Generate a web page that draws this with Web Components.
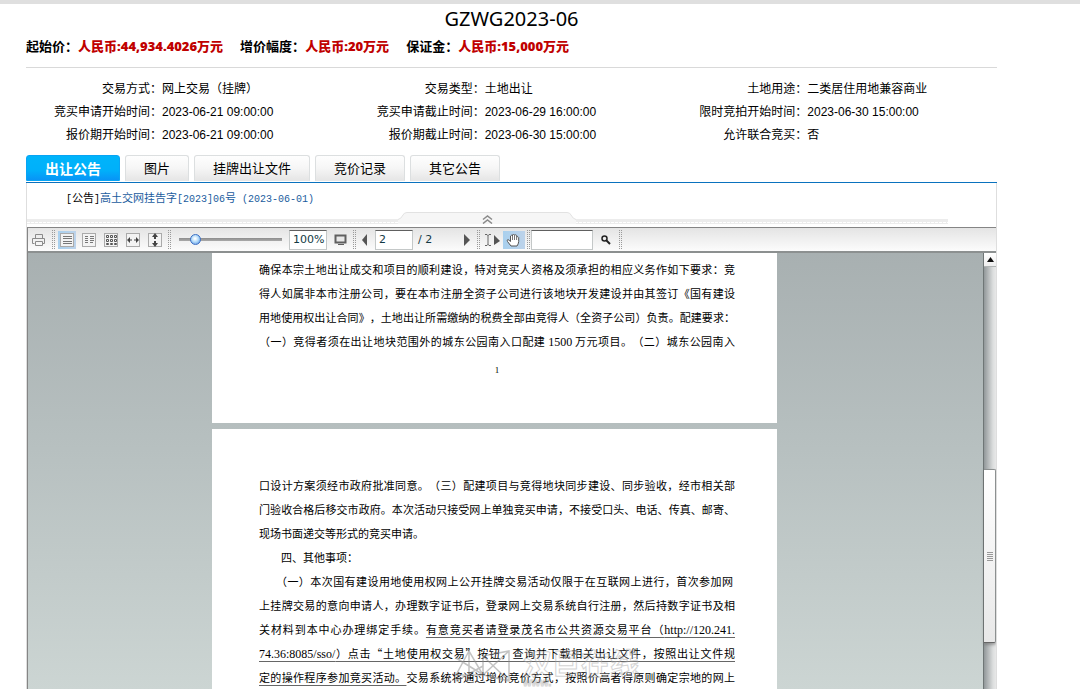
<!DOCTYPE html>
<html lang="zh-CN">
<head>
<meta charset="utf-8">
<title>GZWG2023-06</title>
<style>
html,body{margin:0;height:100%;background:#fff;color:#000;font-family:"Liberation Sans","Noto Sans CJK SC",sans-serif;font-size:12px}
</style>
</head>
<body>
<land-listing></land-listing>
<script>
const define = (name, css, html) => customElements.define(name, class extends HTMLElement {
  constructor() {
    super();
    const t = document.createElement('template');
    t.innerHTML = `<style>*{box-sizing:border-box}${css}</style>${html}`;
    this.attachShadow({mode: 'open'}).appendChild(t.content.cloneNode(true));
  }
});

define('price-item', `
:host{display:block;font:bold 13px/25px "Noto Sans","Noto Sans CJK SC",sans-serif}
b{color:#c00000}
`, `<slot name="label"></slot><b><slot></slot></b>`);

define('detail-row', `
:host{display:flex;line-height:23px;white-space:nowrap}
span{width:136px;flex:none;text-align:right;text-spacing-trim:space-all}
`, `<span><slot name="label"></slot></span><slot></slot>`);

define('tab-item', `
:host{display:block}
button{display:block;height:26px;padding:0 18px;border:1px solid #dcdfe0;border-bottom-color:#e6e6e6;border-radius:3px 3px 0 0;background:linear-gradient(#fefefe,#f6f6f6 50%,#e6e6e6);font:13px/20px "Noto Sans CJK SC",sans-serif;color:#000}
:host([active]) button{font-weight:bold;font-size:14px;color:#fff;border-color:#08a4f4;background:linear-gradient(#00b4fa,#00b0fa 60%,#0894f6)}
`, `<button type="button" role="tab"><slot></slot></button>`);

define('tool-button', `
:host{display:flex;width:22px;flex:none;justify-content:center}
:host([narrow]){width:16px}
button{display:flex;align-items:center;justify-content:center;width:100%;height:18px;padding:0;border:0;background:none}
:host([view]) button{width:18px}
:host([active]) button{background:linear-gradient(90deg,#a9d0ee,#bdd3ea)}
`, `<button type="button"><slot></slot></button>`);

define('tool-sep', `
:host{display:flex;justify-content:center;gap:1px;width:6px;height:20px;flex:none}
i{width:1px;background:repeating-linear-gradient(#9a9a9a 0 1px,transparent 1px 2px)}
`, `<i></i><i></i>`);

define('pdf-toolbar', `
:host{display:flex;align-items:center;height:26px;border-top:1px solid #858585;border-bottom:2px solid #8c9090;background:linear-gradient(#e4e4e4,#fcfcfc)}
input[type=text]{height:20px;border:1px solid #c4c8c8;border-top:1px solid #606060;background:#fff;padding:0 0 0 3px;font:11px "DejaVu Sans",sans-serif;color:#123944;border-radius:0;outline:0}
.zoom{width:38px;margin-left:7px;margin-right:2px}
.page{width:38px;margin-left:2px}
.count{font:11px/20px "DejaVu Sans",sans-serif;color:#123944;width:41px;margin-left:5px}
.find{width:62px;margin-left:0;margin-right:2px}
input[type=range]{appearance:none;width:103px;height:12px;margin:0 0 0 7px;background:linear-gradient(#8b8b8b,#aaa) center/100% 3px no-repeat}
input[type=range]::-webkit-slider-thumb{appearance:none;width:11px;height:11px;border-radius:50%;border:1px solid #3d6fc4;background:radial-gradient(circle at 45% 40%,#fff 5%,#b4dcfa 45%,#4b86dd)}
svg{display:block}
`, `
<tool-button><svg width="16" height="14" fill="none" stroke="#8a8a8a"><path d="M4.500 5V1.500h7V5M3.500 10.500h-2v-5h12v5h-2M4.500 8.500h7v4h-7z"/></svg></tool-button>
<tool-sep></tool-sep>
<tool-button view active><svg width="14" height="14"><rect x=".5" y=".5" width="13" height="13" fill="#f3f3f3" stroke="#aaa"/><path d="M3 3.500h9M3 5.500h9M3 8.500h9M3 10.500h9" stroke="#777"/></svg></tool-button>
<tool-button view><svg width="14" height="14"><rect x=".5" y=".5" width="13" height="13" fill="#f3f3f3" stroke="#aaa"/><path d="M3 3.500h3M3 5.500h3M3 7.500h3M3 9.500h3M8 3.500h4M8 5.500h4M8 7.500h4M8 9.500h3" stroke="#777"/></svg></tool-button>
<tool-button view><svg width="14" height="14"><rect x=".5" y=".5" width="13" height="13" fill="#f3f3f3" stroke="#aaa"/><path d="M2.500 2.500h2v2h-2zM6.500 2.500h2v2h-2zM10.500 2.500h2v2h-2zM2.500 6.500h2v2h-2zM6.500 6.500h2v2h-2zM10.500 6.500h2v2h-2zM2.500 10.500h2v1h-2zM6.500 10.500h2v1h-2zM10.500 10.500h2v1h-2z" fill="none" stroke="#555"/></svg></tool-button>
<tool-button view><svg width="14" height="14"><rect x=".5" y=".5" width="13" height="13" fill="#f3f3f3" stroke="#aaa"/><path d="M1 7l3-3v6zM13 7l-3-3v6zM4 6.500h2v1H4zM8 6.500h2v1H8z" fill="#444"/></svg></tool-button>
<tool-button view><svg width="14" height="14"><rect x=".5" y=".5" width="13" height="13" fill="#f3f3f3" stroke="#aaa"/><path d="M7 0l3 4H4zM7 14l3-4H4zM6 4h2v2H6zM6 8h2v2H6z" fill="#444"/></svg></tool-button>
<tool-sep></tool-sep>
<input type="range" min="0" max="100" value="12" aria-label="缩放">
<input class="zoom" type="text" value="100%" aria-label="缩放比例">
<tool-button><svg width="13" height="12"><path d="M1.500 1.500h10v7h-10z" fill="#e8e8e8" stroke="#606060" stroke-width="2"/><path d="M4 10.500h6" stroke="#606060"/></svg></tool-button>
<tool-sep></tool-sep>
<tool-button narrow><svg width="6" height="12"><path d="M5 0v12L0 6z" fill="#555"/></svg></tool-button>
<input class="page" type="text" value="2" aria-label="页码">
<span class="count">/ 2</span>
<tool-button narrow><svg width="6" height="12"><path d="M0 0v12l6-6z" fill="#555"/></svg></tool-button>
<tool-sep></tool-sep>
<tool-button><svg width="17" height="12"><path d="M1 .5h2l1 1 1-1h2M4 1v10M1 11.500h2l1-1 1 1h2" fill="none" stroke="#666"/><path d="M10 1l6 6-6 4z" fill="#555"/></svg></tool-button>
<tool-button active><svg width="16" height="14"><path d="M5 13L1.500 8.500Q.5 7 2 6.500L4.500 8.500V3Q5.500 1.500 6.500 3V2Q7.500 0 8.500 2V2.500Q9.800 1 10.700 2.500V4Q12 3 12.700 4.500V8.500Q12.500 11 11 13z" fill="#fff" stroke="#555"/><path d="M6.500 3v4M8.500 2v5M10.600 3v4" stroke="#777" fill="none"/></svg></tool-button>
<tool-sep></tool-sep>
<input class="find" type="text" aria-label="查找">
<tool-button><svg width="10" height="10"><circle cx="3.500" cy="3.500" r="2.500" fill="none" stroke="#222" stroke-width="1.500"/><path d="M5.500 5.500L9 9" stroke="#222" stroke-width="2"/></svg></tool-button>
<tool-sep></tool-sep>
`);

define('pdf-page', `
:host{display:block;position:relative;width:565px;flex:none;background:#fff;padding:0 42px 0 47px}
`, `<slot></slot>`);

define('water-mark', `
:host{display:flex;gap:12px;position:absolute;left:243px;top:219px;pointer-events:none;opacity:.5}
svg{display:block}
div{font:bold 29px/29px "Noto Sans CJK SC",sans-serif;color:#fff4;-webkit-text-stroke:1px #aaa}
small{display:block;font:bold 11px/11px "Liberation Sans",sans-serif}
`, `<svg width="56" height="36" fill="none" stroke="#888" stroke-width="1.500"><path d="M1 27L14 3l14 24zM14 3v30M1 10l26 16M28 8L54 3v30L28 27zM28 27L54 3M28 8l26 25M1 33l27-15"/></svg><div>汉巨在线<small>www.</small></div>`);

define('scroll-bar', `
:host{display:flex;flex-direction:column;width:13px;flex:none;border-left:1px solid #6f7676;background:linear-gradient(90deg,#92989a,#dcdede 75%,#e8e8e8)}
button{height:14px;flex:none;padding:0;border:0;border-bottom:1px solid #b0b4b4;background:linear-gradient(#fff,#eee);display:flex;align-items:center;justify-content:center}
i{flex:203 0 0}
i:last-child{flex-grow:46}
div{height:174px;flex:none;border:1px solid #8c9090;border-left:0;border-bottom-color:#666;border-radius:0 2px 2px 0;background:linear-gradient(#fff,#e8e8e8);display:flex;align-items:center;justify-content:center;box-shadow:0 2px 3px #6668}
`, `<button type="button" aria-label="向上滚动"><svg width="7" height="5"><path d="M3.500 0L7 5H0z" fill="#111"/></svg></button><i></i><div><svg width="6" height="9"><path d="M0 .5h6M0 2.500h6M0 4.500h6M0 6.500h6M0 8.500h6" stroke="#999"/></svg></div><i></i>`);

define('pdf-document', `
:host{display:flex;flex:1;min-height:0;overflow:hidden}
main{flex:1;min-width:0;display:flex;flex-direction:column;align-items:center;gap:6px;padding-right:22px;overflow:hidden;background:linear-gradient(#a8b0b1,#b7c0c0 45%,#ccd5d3)}
p{margin:0;font:11px/24px "Noto Sans CJK SC",sans-serif;text-align-last:justify;white-space:nowrap;text-spacing-trim:space-all}
.end{text-align-last:left}
.indent{padding-left:22px}
.inset{padding-left:17px;padding-right:2px}
.first{padding-top:4px;padding-bottom:45px}
.second{padding-top:44px;padding-bottom:120px}
.num{font:9px/16px "Liberation Serif",serif;text-align-last:center;margin-top:9px}
u{text-underline-offset:3px;text-decoration-thickness:1px;text-decoration-color:#666}
.la{font-family:"Liberation Serif",serif;font-size:12px;line-height:1}
`, `<main>
<pdf-page class="first">
<p>确保本宗土地出让成交和项目的顺利建设，特对竞买人资格及须承担的相应义务作如下要求：竞</p>
<p>得人如属非本市注册公司，要在本市注册全资子公司进行该地块开发建设并由其签订《国有建设</p>
<p>用地使用权出让合同》，土地出让所需缴纳的税费全部由竞得人（全资子公司）负责。配建要求：</p>
<p>（一）竞得者须在出让地块范围外的城东公园南入口配建 <span class="la">1500</span> 万元项目。（二）城东公园南入</p>
<p class="num">1</p>
</pdf-page>
<pdf-page class="second">
<p>口设计方案须经市政府批准同意。（三）配建项目与竞得地块同步建设、同步验收，经市相关部</p>
<p>门验收合格后移交市政府。本次活动只接受网上单独竞买申请，不接受口头、电话、传真、邮寄、</p>
<p class="end">现场书面递交等形式的竞买申请。</p>
<p class="end indent">四、其他事项：</p>
<p class="inset">（一）本次国有建设用地使用权网上公开挂牌交易活动仅限于在互联网上进行，首次参加网</p>
<p>上挂牌交易的意向申请人，办理数字证书后，登录网上交易系统自行注册，然后持数字证书及相</p>
<p>关材料到本中心办理绑定手续。<u>有意竞买者请登录茂名市公共资源交易平台（<span class="la">http://120.241.</span></u></p>
<p><u><span class="la">74.36:8085/sso/</span>）点击“土地使用权交易”按钮，查询并下载相关出让文件，按照出让文件规</u></p>
<p><u>定的操作程序参加竞买活动。</u>交易系统将通过增价竞价方式，按照价高者得原则确定宗地的网上</p>
<water-mark></water-mark>
</pdf-page>
</main><scroll-bar></scroll-bar>`);

define('collapse-handle', `
:host{display:grid;height:15px;padding-bottom:3px;align-items:end}
hr,button{grid-area:1/1}
hr{width:auto;height:5px;margin:0 48px 0 0;border:0;background:repeating-linear-gradient(90deg,#fff 0 3px,transparent 3px 4px) 0 3px/100% 1px no-repeat,#ececec;justify-self:stretch}
button{justify-self:center;margin-right:50px;padding:0;border:0;background:none;height:12px}
svg{display:block}
`, `<hr><button type="button" aria-label="收起"><svg width="178" height="12"><path d="M0 7.500Q3 7 5 3Q6 .5 9 .5H169Q172 .5 173 3Q175 7 178 7.500V12H0z" fill="#f6f6f6"/><path d="M0 7.500Q3 7 5 3Q6 .5 9 .5H169Q172 .5 173 3Q175 7 178 7.500" fill="none" stroke="#e2e2e2"/><path d="M85 7.500l4.500-3.500 4.500 3.500M85 11.500l4.500-3.500 4.500 3.500" fill="none" stroke="#8a8a8a" stroke-width="1.500"/></svg></button>`);

define('land-listing', `
:host{display:flex;flex-direction:column;height:100vh;overflow:hidden;border-top:4px solid #dfdfdf;box-sizing:border-box;padding:0 83px 0 26px}
h1{margin:0;text-align:center;font:20px/30px "Noto Sans",sans-serif}
.prices{display:flex;gap:17px;height:34px;border-bottom:1px solid #d9d9d9}
.details{display:grid;grid-template-columns:repeat(3,1fr);padding:10px 3px 8px 0}
nav{display:flex;gap:5px;padding-bottom:1px;border-bottom:1px solid #0a72be}
section{flex:1;min-height:0;display:flex;flex-direction:column;border:1px solid #dedede;border-width:0 1px}
.notice{font-size:11px;line-height:30px;height:29px;padding-left:39px;white-space:nowrap}
.notice code{font:10px/1 "Liberation Mono",monospace}
a{color:#1a5c9e;text-decoration:none}
.viewer{flex:1;min-height:0;display:flex;flex-direction:column;border-left:1px solid #858585}
`, `
<h1>GZWG2023-06</h1>
<div class="prices">
<price-item><span slot="label">起始价：</span>人民币:44,934.4026万元</price-item>
<price-item><span slot="label">增价幅度：</span>人民币:20万元</price-item>
<price-item><span slot="label">保证金：</span>人民币:15,000万元</price-item>
</div>
<div class="details">
<detail-row><span slot="label">交易方式：</span>网上交易（挂牌）</detail-row>
<detail-row><span slot="label">交易类型：</span>土地出让</detail-row>
<detail-row><span slot="label">土地用途：</span>二类居住用地兼容商业</detail-row>
<detail-row><span slot="label">竞买申请开始时间：</span>2023-06-21 09:00:00</detail-row>
<detail-row><span slot="label">竞买申请截止时间：</span>2023-06-29 16:00:00</detail-row>
<detail-row><span slot="label">限时竞拍开始时间：</span>2023-06-30 15:00:00</detail-row>
<detail-row><span slot="label">报价期开始时间：</span>2023-06-21 09:00:00</detail-row>
<detail-row><span slot="label">报价期截止时间：</span>2023-06-30 15:00:00</detail-row>
<detail-row><span slot="label">允许联合竞买：</span>否</detail-row>
</div>
<nav role="tablist"><tab-item active>出让公告</tab-item><tab-item>图片</tab-item><tab-item>挂牌出让文件</tab-item><tab-item>竞价记录</tab-item><tab-item>其它公告</tab-item></nav>
<section>
<div class="notice"><code>[</code>公告<code>]</code><a href="#">高土交网挂告字<code>[2023]06</code>号<code> (2023-06-01)</code></a></div>
<collapse-handle></collapse-handle>
<div class="viewer"><pdf-toolbar></pdf-toolbar><pdf-document></pdf-document></div>
</section>
`);
</script>
</body>
</html>
